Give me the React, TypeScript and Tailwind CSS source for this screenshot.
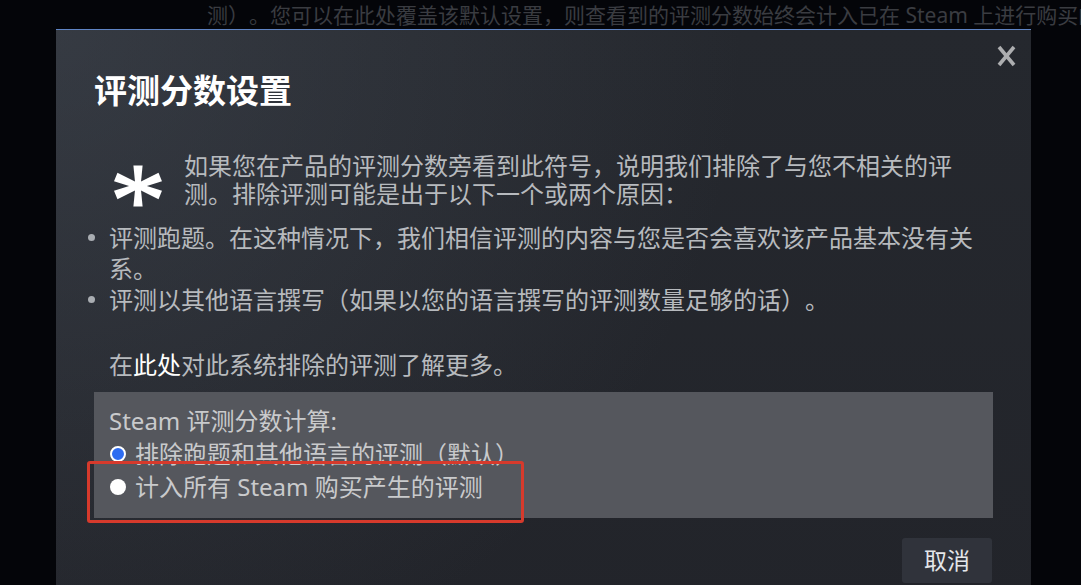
import React from "react";

const font = { fontFamily: '"Noto Sans", "Noto Sans CJK SC", sans-serif' };

function Asterisk() {
  const arm = "0,-2.6 24,-4.6 24,4.6 0,2.6";
  return (
    <svg width="50" height="42" viewBox="-25 -21 50 42" className="block">
      <g fill="#ffffff">
        <polygon points="-2.6,0 2.6,0 4.6,-20.5 -4.6,-20.5" />
        <polygon points="-2.6,0 2.6,0 4.6,20.5 -4.6,20.5" />
        <polygon points={arm} transform="rotate(-22)" />
        <polygon points={arm} transform="rotate(22)" />
        <polygon points={arm} transform="rotate(158)" />
        <polygon points={arm} transform="rotate(202)" />
        <circle cx="0" cy="0" r="4" />
      </g>
    </svg>
  );
}

function CloseIcon() {
  return (
    <svg width="19" height="22" viewBox="0 0 19 22" className="block">
      <g stroke="#adaeb0" strokeWidth="3.6" strokeLinecap="butt">
        <line x1="2" y1="2" x2="17" y2="20" />
        <line x1="17" y1="2" x2="2" y2="20" />
      </g>
    </svg>
  );
}

export default function App() {
  return (
    <div
      className="relative w-[1081px] h-[585px] overflow-hidden bg-[#040509] [text-spacing-trim:space-all]"
      style={font}
    >
      {/* page content behind the modal */}
      <div className="pl-[207px] pt-[2px] text-[21px] leading-[26px] text-[#3a3c41] whitespace-nowrap">
        测）。您可以在此处覆盖该默认设置，则查看到的评测分数始终会计入已在 Steam 上进行购买的
      </div>

      {/* modal */}
      <div className="absolute left-[56px] top-[29px] w-[975px] h-[600px] border-t border-[#5f84c4] bg-[radial-gradient(circle_at_top_left,rgba(74,81,92,0.45)_0%,rgba(75,81,92,0)_60%),linear-gradient(#25282e,#22242a)] px-[38px] pt-[41px]">
        <button className="absolute right-[15px] top-[15px]">
          <CloseIcon />
        </button>

        <div className="text-[33px] leading-[40px] font-bold text-white">评测分数设置</div>

        <div className="mt-[41px] flex text-[24px] leading-[28px] text-[#b7babe]">
          <div className="ml-[19px] mt-[13px] w-[71px] shrink-0">
            <Asterisk />
          </div>
          <div>
            如果您在产品的评测分数旁看到此符号，说明我们排除了与您不相关的评测。排除评测可能是出于以下一个或两个原因：
          </div>
        </div>

        <div className="mt-[14px] ml-[-6px] flex flex-col text-[24px] leading-[31px] text-[#b7babe]">
          <div className="flex">
            <span className="mt-[12px] h-[7px] w-[7px] shrink-0 rounded-full bg-[#a9adb2]" />
            <span className="ml-[14px]">
              评测跑题。在这种情况下，我们相信评测的内容与您是否会喜欢该产品基本没有关系。
            </span>
          </div>
          <div className="flex">
            <span className="mt-[12px] h-[7px] w-[7px] shrink-0 rounded-full bg-[#a9adb2]" />
            <span className="ml-[14px]">评测以其他语言撰写（如果以您的语言撰写的评测数量足够的话）。</span>
          </div>
        </div>

        <div className="mt-[34px] pl-[15px] text-[24px] leading-[31px] text-[#b7babe]">
          在<span className="text-white">此处</span>对此系统排除的评测了解更多。
        </div>

        <div className="mt-[12px] h-[126px] bg-[#55575d] px-[15px] pt-[12px] text-[24px] leading-[33px] text-[#c9cacc]">
          <div>Steam 评测分数计算:</div>
          <div className="flex items-center">
            <span className="ml-[1px] h-[16px] w-[16px] shrink-0 rounded-full border-2 border-white bg-[#2e6cf0]" />
            <span className="ml-[9px]">排除跑题和其他语言的评测（默认）</span>
          </div>
          <div className="flex items-center">
            <span className="ml-[1px] h-[16px] w-[16px] shrink-0 rounded-full bg-white" />
            <span className="ml-[9px]">计入所有 Steam 购买产生的评测</span>
          </div>
        </div>

        <div className="mt-[20px] flex justify-end">
          <button className="mr-[1px] h-[45px] w-[90px] rounded-[3px] bg-[#30333b] text-[23px] text-[#e4e7ea]">
            取消
          </button>
        </div>
      </div>

      {/* red annotation box */}
      <div className="absolute left-[87px] top-[461px] h-[62px] w-[437px] rounded-[3px] border-[3px] border-[#d63a2c]" />
    </div>
  );
}
